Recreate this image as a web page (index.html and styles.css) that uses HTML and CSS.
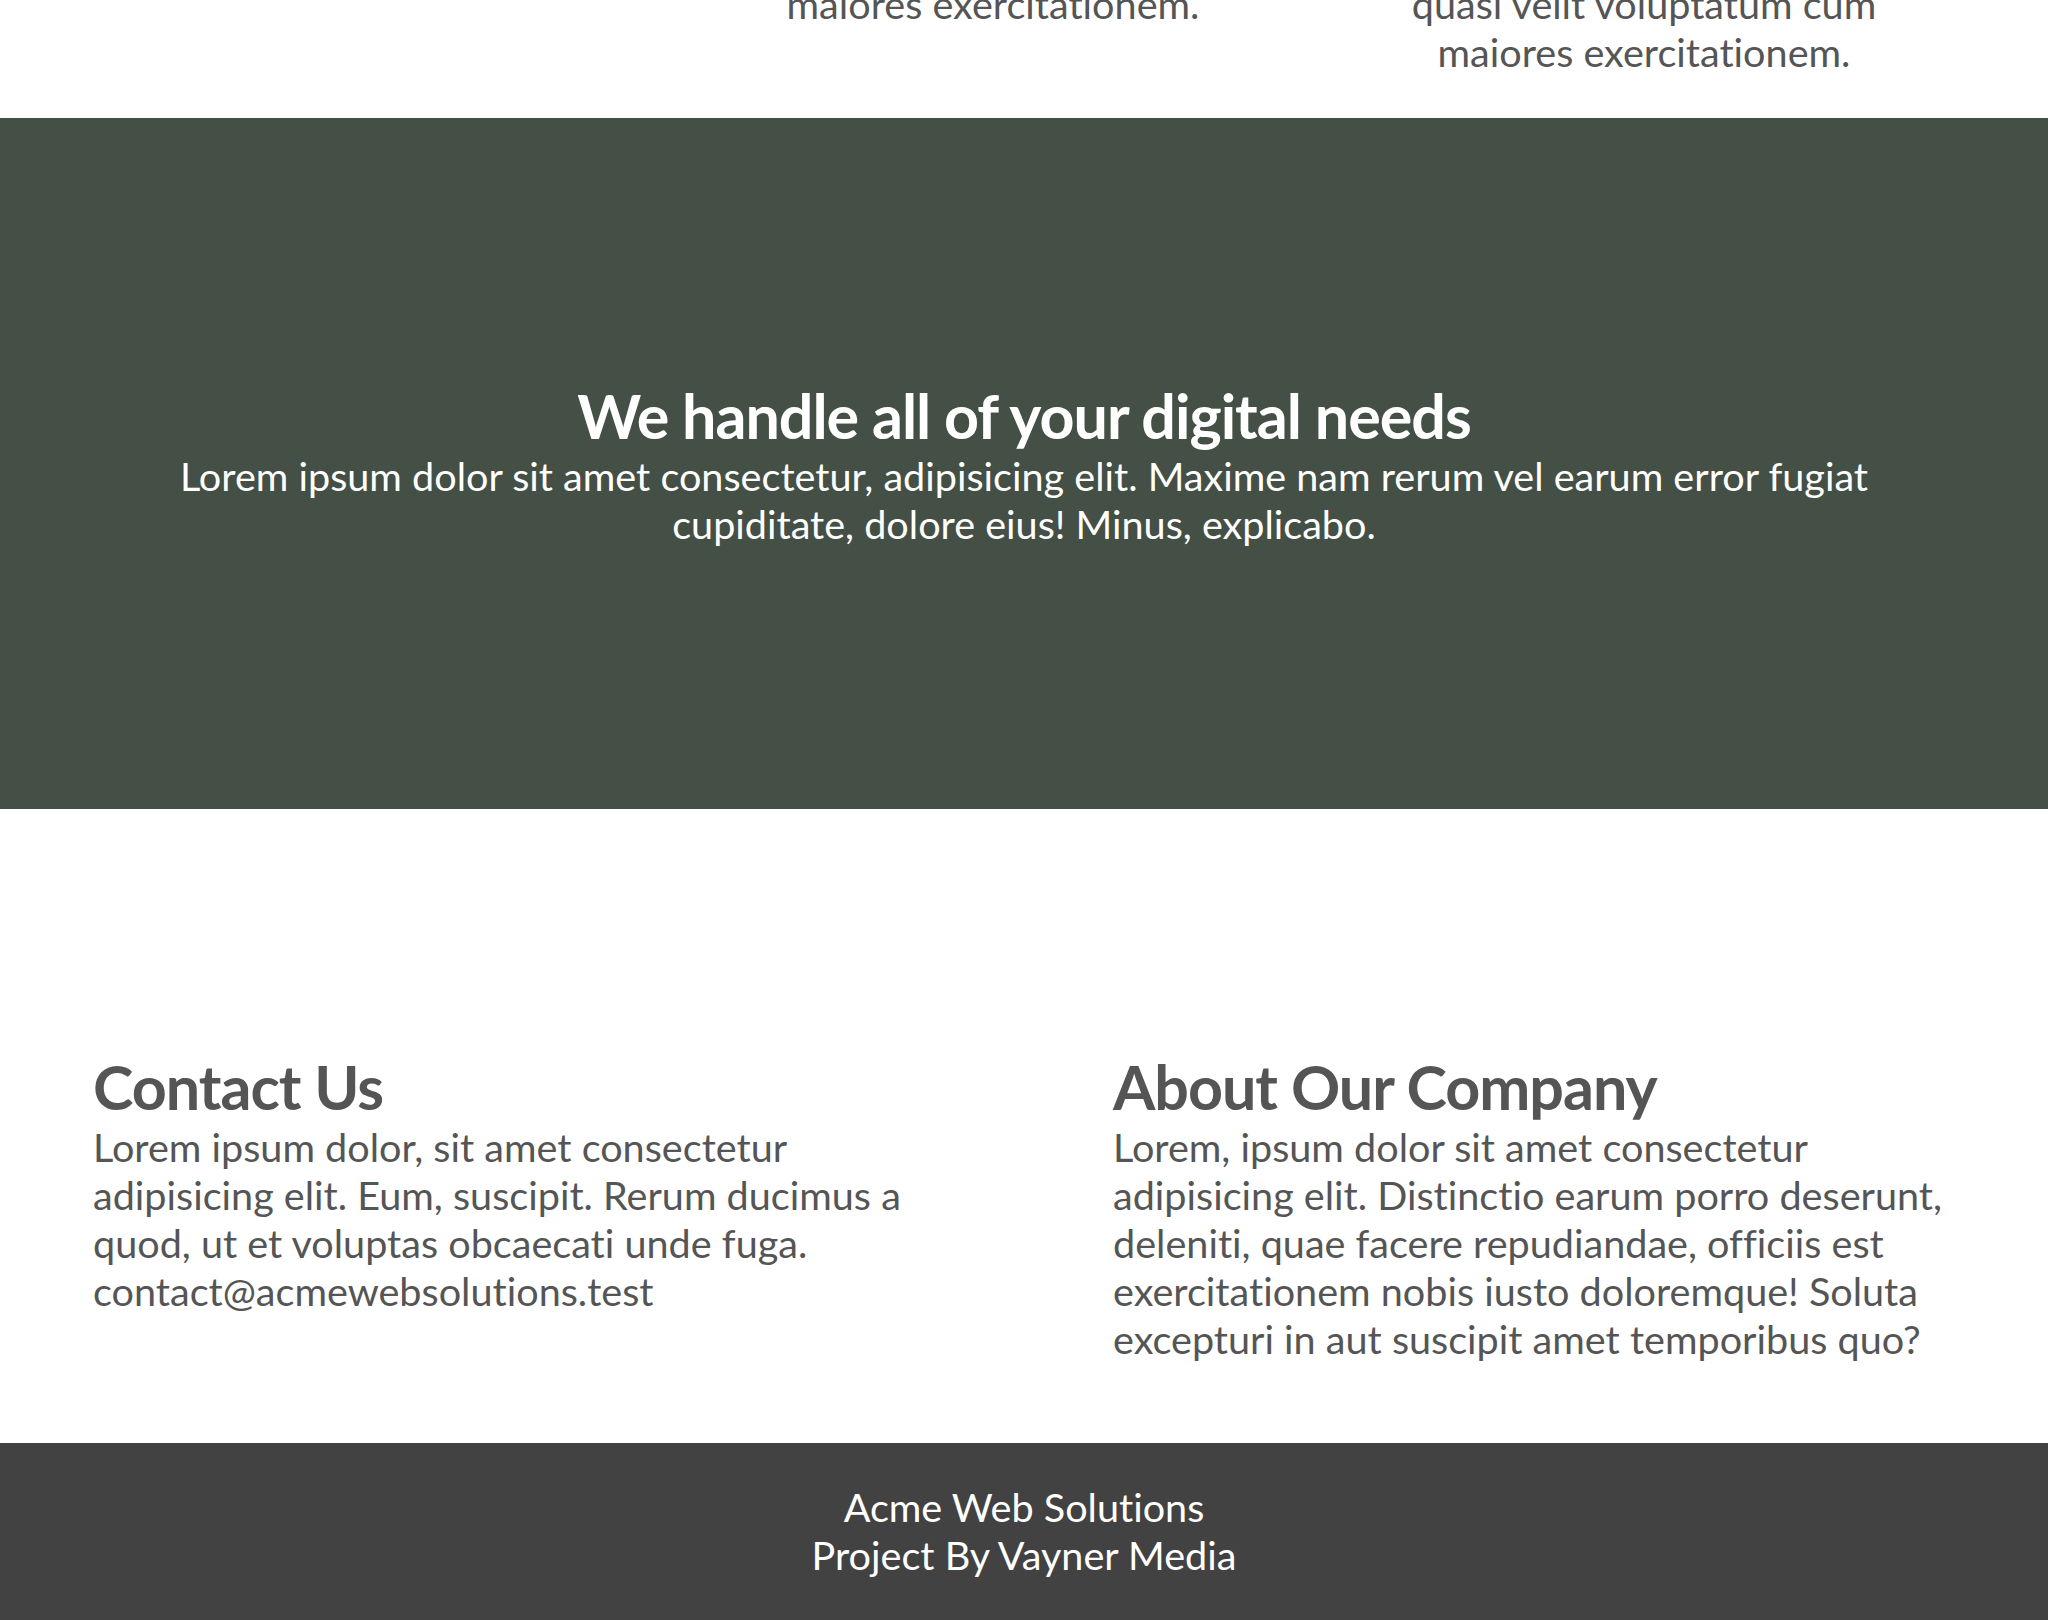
FILE: index.html
```html
<!DOCTYPE html>
<html lang="en">
<head>
<meta charset="utf-8">
<title>Acme Web Solutions</title>
<link rel="stylesheet" href="styles.css">
</head>
<body>
<section class="services">
  <div class="service"></div>
  <div class="service"><p>maiores exercitationem.</p></div>
  <div class="service"><p>quasi velit voluptatum cum<br>maiores exercitationem.</p></div>
</section>
<section class="banner">
  <h2 class="banner-title">We handle all of your digital needs</h2>
  <p class="banner-text">Lorem ipsum dolor sit amet consectetur, adipisicing elit. Maxime nam rerum vel earum error fugiat cupiditate, dolore eius! Minus, explicabo.</p>
</section>
<section class="info">
  <div class="info-col">
    <h2 class="info-title">Contact Us</h2>
    <p class="info-text">Lorem ipsum dolor, sit amet consectetur adipisicing elit. Eum, suscipit. Rerum ducimus a quod, ut et voluptas obcaecati unde fuga.</p>
    <p class="info-text">contact@acmewebsolutions.test</p>
  </div>
  <div class="info-col">
    <h2 class="info-title">About Our Company</h2>
    <p class="info-text">Lorem, ipsum dolor sit amet consectetur adipisicing elit. Distinctio earum porro deserunt, deleniti, quae facere repudiandae, officiis est exercitationem nobis iusto doloremque! Soluta excepturi in aut suscipit amet temporibus quo?</p>
  </div>
</section>
<footer class="footer">
  <p>Acme Web Solutions</p>
  <p>Project By Vayner Media</p>
</footer>
</body>
</html>
```
FILE: styles.css
```css
* { box-sizing: border-box; }
html, body { margin: 0; padding: 0; }
body {
  font-family: Lato, "Open Sans", sans-serif;
  font-size: 39.6px;
  line-height: 48px;
  color: #555;
  background: #fff;
  font-variant-ligatures: no-common-ligatures;
}
p, h2 { margin: 0; }
.services {
  display: grid;
  grid-template-columns: repeat(3, 560px);
  column-gap: 91px;
  padding: 0 124px 0 62px;
  margin-top: -20px;
  height: 138px;
  text-align: center;
}
.banner {
  background: #444f46;
  color: #fff;
  height: 691px;
  display: flex;
  flex-direction: column;
  justify-content: center;
  align-items: center;
  text-align: center;
  padding: 0 150px;
}
.banner-title {
  font-size: 61px;
  font-weight: 700;
  line-height: 72px;
  letter-spacing: -1px;
}
.info {
  display: grid;
  grid-template-columns: 842px 842px;
  column-gap: 178px;
  padding: 242px 93px 80px;
}
.info-title {
  font-size: 61px;
  font-weight: 700;
  line-height: 72px;
  letter-spacing: -1px;
}
.footer {
  background: #424242;
  color: #fff;
  text-align: center;
  padding: 40px 0 41px;
}
```
